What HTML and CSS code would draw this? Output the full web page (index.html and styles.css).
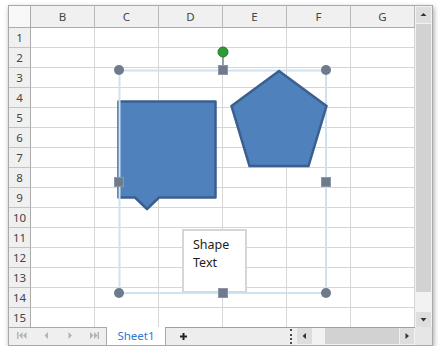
FILE: index.html
```html
<!DOCTYPE html>
<html>
<head>
<meta charset="utf-8">
<link rel="stylesheet" href="styles.css">
</head>
<body>
<div class="frame">
  <div class="sheet">
    <div class="corner"></div>
    <div class="ch">B</div><div class="ch">C</div><div class="ch">D</div><div class="ch">E</div><div class="ch">F</div><div class="ch">G</div>
    <div class="rh">1</div><div class="c"></div><div class="c"></div><div class="c"></div><div class="c"></div><div class="c"></div><div class="c"></div>
    <div class="rh">2</div><div class="c"></div><div class="c"></div><div class="c"></div><div class="c"></div><div class="c"></div><div class="c"></div>
    <div class="rh">3</div><div class="c"></div><div class="c"></div><div class="c"></div><div class="c"></div><div class="c"></div><div class="c"></div>
    <div class="rh">4</div><div class="c"></div><div class="c"></div><div class="c"></div><div class="c"></div><div class="c"></div><div class="c"></div>
    <div class="rh">5</div><div class="c"></div><div class="c"></div><div class="c"></div><div class="c"></div><div class="c"></div><div class="c"></div>
    <div class="rh">6</div><div class="c"></div><div class="c"></div><div class="c"></div><div class="c"></div><div class="c"></div><div class="c"></div>
    <div class="rh">7</div><div class="c"></div><div class="c"></div><div class="c"></div><div class="c"></div><div class="c"></div><div class="c"></div>
    <div class="rh">8</div><div class="c"></div><div class="c"></div><div class="c"></div><div class="c"></div><div class="c"></div><div class="c"></div>
    <div class="rh">9</div><div class="c"></div><div class="c"></div><div class="c"></div><div class="c"></div><div class="c"></div><div class="c"></div>
    <div class="rh">10</div><div class="c"></div><div class="c"></div><div class="c"></div><div class="c"></div><div class="c"></div><div class="c"></div>
    <div class="rh">11</div><div class="c"></div><div class="c"></div><div class="c"></div><div class="c"></div><div class="c"></div><div class="c"></div>
    <div class="rh">12</div><div class="c"></div><div class="c"></div><div class="c"></div><div class="c"></div><div class="c"></div><div class="c"></div>
    <div class="rh">13</div><div class="c"></div><div class="c"></div><div class="c"></div><div class="c"></div><div class="c"></div><div class="c"></div>
    <div class="rh">14</div><div class="c"></div><div class="c"></div><div class="c"></div><div class="c"></div><div class="c"></div><div class="c"></div>
    <div class="rh">15</div><div class="c"></div><div class="c"></div><div class="c"></div><div class="c"></div><div class="c"></div><div class="c"></div>
  </div>

  <div class="vscroll">
    <div class="vbtn"><svg width="15" height="16" viewBox="0 0 15 16"><polygon points="4.5,9 10.5,9 7.5,6" fill="#333"/></svg></div>
    <div class="vthumb"></div>
    <div class="vspace"></div>
    <div class="vbtn down"><svg width="15" height="15" viewBox="0 0 15 15"><polygon points="4.5,6 10.5,6 7.5,9.5" fill="#333"/></svg></div>
  </div>

  <div class="tabbar">
    <div class="nav">
      <svg width="97" height="17" viewBox="9 328 97 17">
        <g fill="#b4b4b4">
          <rect x="17" y="332" width="1.5" height="7"/>
          <polygon points="22.5,332 19,335.5 22.5,339"/>
          <polygon points="26.5,332 23,335.5 26.5,339"/>
          <polygon points="48,332 44.5,335.5 48,339"/>
          <polygon points="68.5,332 72,335.5 68.5,339"/>
          <polygon points="90,332 93.5,335.5 90,339"/>
          <polygon points="94,332 97.5,335.5 94,339"/>
          <rect x="97.5" y="332" width="1.5" height="7"/>
        </g>
      </svg>
    </div>
    <div class="tab">Sheet1</div>
    <div class="add">
      <svg width="9" height="9" viewBox="0 0 9 9"><path d="M1 4.5H8M4.5 1V8" stroke="#222" stroke-width="2"/></svg>
    </div>
    <div class="splitter"></div>
    <div class="hscroll">
      <div class="hbtn"><svg width="15" height="16" viewBox="0 0 15 16"><polygon points="9,5 5.5,8 9,11" fill="#333"/></svg></div>
      <div class="hgap"></div>
      <div class="hthumb"></div>
      <div class="hspace"></div>
      <div class="hbtn right"><svg width="14" height="16" viewBox="0 0 14 16"><polygon points="5.5,5 9,8 5.5,11" fill="#333"/></svg></div>
    </div>
  </div>
  <div class="scorner"></div>

  <div class="textbox">Shape<br>Text</div>

  <svg class="shapes" width="406" height="322" viewBox="9 6 406 322">
    <path d="M118.5 101.5 H215.5 V197.5 H159 L147 209 L135 197.5 H118.5 Z" fill="#4f81bd" stroke="#3b5f8e" stroke-width="2.5" stroke-linejoin="round"/>
    <rect x="119.5" y="70.5" width="206.5" height="222.5" fill="none" stroke="#cde3ef" stroke-width="2"/>
    <polygon points="279,71 326.5,106 308.5,166 249.5,166 231.5,106" fill="#4f81bd" stroke="#3b5f8e" stroke-width="2.5" stroke-linejoin="miter"/>
    <line x1="223" y1="56" x2="223" y2="66" stroke="#7b8490" stroke-width="1.5"/>
    <circle cx="223" cy="52" r="5" fill="#2f9a36" stroke="#237a2a" stroke-width="1"/>
    <g fill="#6e7b8c">
      <circle cx="119" cy="70" r="5"/>
      <circle cx="326" cy="70" r="5"/>
      <circle cx="119" cy="293" r="5"/>
      <circle cx="326" cy="293" r="5"/>
    </g>
    <g fill="#6e7b8c" stroke="#8d96a2" stroke-width="1">
      <rect x="218.5" y="65.5" width="9" height="9"/>
      <rect x="114.5" y="177.5" width="9" height="9"/>
      <rect x="321.5" y="177.5" width="9" height="9"/>
      <rect x="218.5" y="288.5" width="9" height="9"/>
    </g>
  </svg>
</div>
</body>
</html>
```

FILE: styles.css
```css
html, body {
  margin: 0;
  padding: 0;
  background: #ffffff;
}

body {
  font-family: "Noto Sans", "Open Sans", sans-serif;
}

.frame {
  position: relative;
  margin: 5px 0 0 8px;
  width: 423px;
  height: 339px;
  border: 1px solid #a9a9a9;
  box-shadow: 1px 2px 5px rgba(0, 0, 0, 0.35);
  display: grid;
  grid-template-columns: 406px 17px;
  grid-template-rows: 322px 17px;
  background: #ffffff;
}

.sheet {
  display: grid;
  grid-template-columns: 22px repeat(6, 64px);
  grid-template-rows: 22px repeat(15, 20px);
}

.sheet > div {
  box-sizing: border-box;
}

.corner {
  background: #f8f8f8;
  border-right: 1px solid #ababab;
  border-bottom: 1px solid #ababab;
}

.ch {
  background: #f0f0f0;
  border-right: 1px solid #b9b9b9;
  border-bottom: 1px solid #ababab;
  color: #444444;
  font-size: 11.5px;
  line-height: 21px;
  text-align: center;
}

.rh {
  background: #f0f0f0;
  border-right: 1px solid #ababab;
  border-bottom: 1px solid #c3c3c3;
  color: #444444;
  font-size: 11.5px;
  line-height: 19px;
  text-align: center;
}

.c {
  border-right: 1px solid #d6d6d6;
  border-bottom: 1px solid #d6d6d6;
}

.vscroll {
  background: #f2f2f2;
  display: flex;
  flex-direction: column;
  padding: 1px 1px 1px 1px;
  box-sizing: border-box;
}

.vbtn {
  height: 16px;
  background: #dedede;
  display: flex;
}

.vbtn.down {
  height: 15px;
}

.vthumb {
  margin-top: 1px;
  height: 268px;
  background: #d2d2d2;
}

.vspace {
  flex: 1;
}

.tabbar {
  margin-top: -1px;
  height: 18px;
  display: flex;
}

.nav {
  width: 98px;
  box-sizing: border-box;
  background: #efefef;
  border-top: 1px solid #a9a9a9;
  border-right: 1px solid #a9a9a9;
  display: flex;
}

.tab {
  width: 58px;
  box-sizing: border-box;
  background: #ffffff;
  color: #2b7bd3;
  font-size: 11.5px;
  line-height: 17px;
  text-align: center;
}

.add {
  width: 125px;
  box-sizing: border-box;
  background: #ededed;
  border-top: 1px solid #a0a0a0;
  border-left: 1px solid #a9a9a9;
  display: flex;
  align-items: center;
  padding-left: 13px;
}

.splitter {
  width: 6px;
  box-sizing: border-box;
  background: #efefef;
  border-top: 1px solid #a0a0a0;
  display: flex;
  padding: 1px 0 1px 0;
}

.splitter::before {
  content: "";
  display: block;
  width: 2px;
  border-left: 2px dotted #4a4a4a;
  box-sizing: border-box;
}

.hscroll {
  width: 119px;
  box-sizing: border-box;
  background: #f2f2f2;
  border-top: 1px solid #a0a0a0;
  display: flex;
  padding: 0 1px 1px 1px;
}

.hbtn {
  width: 15px;
  background: #dedede;
  display: flex;
}

.hbtn.right {
  width: 14px;
}

.hgap {
  width: 13px;
}

.hthumb {
  width: 74px;
  background: #d2d2d2;
}

.hspace {
  width: 1px;
}

.scorner {
  margin-top: -1px;
  height: 18px;
  background: #e6e6e6;
  border-top: 1px solid #e6e6e6;
  box-sizing: border-box;
}

.textbox {
  position: absolute;
  left: 173px;
  top: 223px;
  width: 65px;
  height: 64px;
  box-sizing: border-box;
  border: 2px solid #d6d6d6;
  background: #ffffff;
  padding: 5px 0 0 9px;
  font-size: 12.5px;
  line-height: 18px;
  color: #1e1e1e;
}

.shapes {
  position: absolute;
  left: 0;
  top: 0;
}
```
